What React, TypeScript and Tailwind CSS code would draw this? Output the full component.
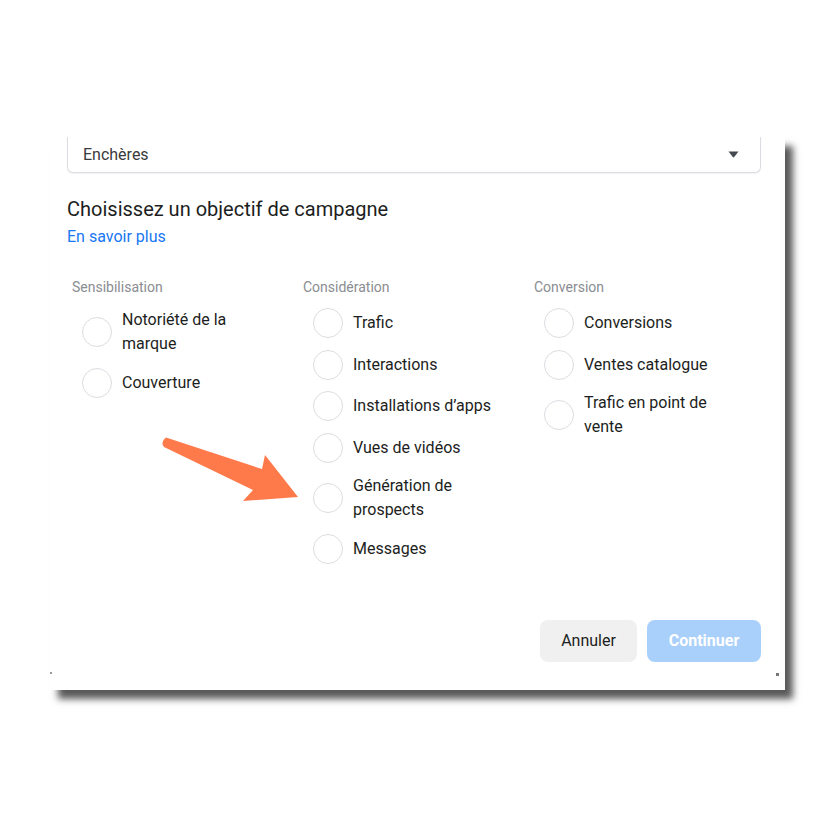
import React from "react";

const columns: { title: string; items: string[] }[] = [
  { title: "Sensibilisation", items: ["Notoriété de la marque", "Couverture"] },
  {
    title: "Considération",
    items: [
      "Trafic",
      "Interactions",
      "Installations d’apps",
      "Vues de vidéos",
      "Génération de prospects",
      "Messages",
    ],
  },
  {
    title: "Conversion",
    items: ["Conversions", "Ventes catalogue", "Trafic en point de vente"],
  },
];

function Radio({ label }: { label: string }) {
  return (
    <div className="flex items-center gap-[10px] pl-[10px]">
      <div className="w-[30px] h-[30px] shrink-0 rounded-full border-[1.5px] border-[#dadde1] bg-white" />
      <div className="max-w-[160px] text-[16px] leading-[24px] text-[#1c1e21]">{label}</div>
    </div>
  );
}

export default function App() {
  return (
    <div className="relative w-[828px] h-[828px] bg-white overflow-hidden font-['Roboto',sans-serif]">
      <div className="relative mt-[137px] ml-[50px] w-[735px] h-[553px] bg-white shadow-[8px_9px_7px_rgba(0,0,0,0.65)] flex flex-col pl-[17px] pr-[24px]">
        <div className="h-[36px] border border-t-0 border-[#dadde1] rounded-b-[6px] shadow-[0_1px_2px_rgba(0,0,0,0.06)] flex items-center justify-between pl-[15px] pr-[21px]">
          <span className="text-[16px] text-[#3a3b3c]">Enchères</span>
          <svg width="11" height="7" viewBox="0 0 11 7">
            <path d="M0.5 0.5 H10.5 L6.2 6 Q5.5 6.8 4.8 6 Z" fill="#444950" />
          </svg>
        </div>
        <div className="mt-[22px] text-[20px] leading-[28px] text-[#1c1e21]">
          Choisissez un objectif de campagne
        </div>
        <div className="mt-[2px] text-[16px] leading-[24px] text-[#1877f2]">En savoir plus</div>

        <div className="mt-[28px] flex pl-[5px]">
          {columns.map((col, i) => (
            <div key={col.title} className={i < 2 ? "w-[231px]" : "flex-1"}>
              <div className="text-[14px] leading-[20px] text-[#8a8d91]">{col.title}</div>
              <div className="mt-[11px] flex flex-col gap-[11.6px]">
                {col.items.map((it) => (
                  <Radio key={it} label={it} />
                ))}
              </div>
            </div>
          ))}
        </div>

        <div className="mt-auto mb-[28px] flex justify-end gap-[10px]">
          <button className="w-[97px] h-[42px] rounded-[8px] bg-[#f0f0f0] text-[16px] font-normal text-[#1c1e21]">
            Annuler
          </button>
          <button className="w-[114px] h-[42px] rounded-[8px] bg-[#a9d0fa] text-[16px] font-bold text-white">
            Continuer
          </button>
        </div>

        <div className="absolute left-0 bottom-[16px] w-[2px] h-[2px] bg-[#999]" />
        <div className="absolute right-[6px] bottom-[14px] w-[3px] h-[3px] bg-[#777]" />
      </div>

      <svg
        className="absolute left-[155px] top-[430px] pointer-events-none"
        width="150"
        height="80"
        viewBox="155 430 150 80"
      >
        <path
          d="M166 437.5 L262 469 L265 455 L298 497 L243 501 L253 490 L164 447 Q160 442 166 437.5 Z"
          fill="#ff7a4b"
        />
      </svg>
    </div>
  );
}
